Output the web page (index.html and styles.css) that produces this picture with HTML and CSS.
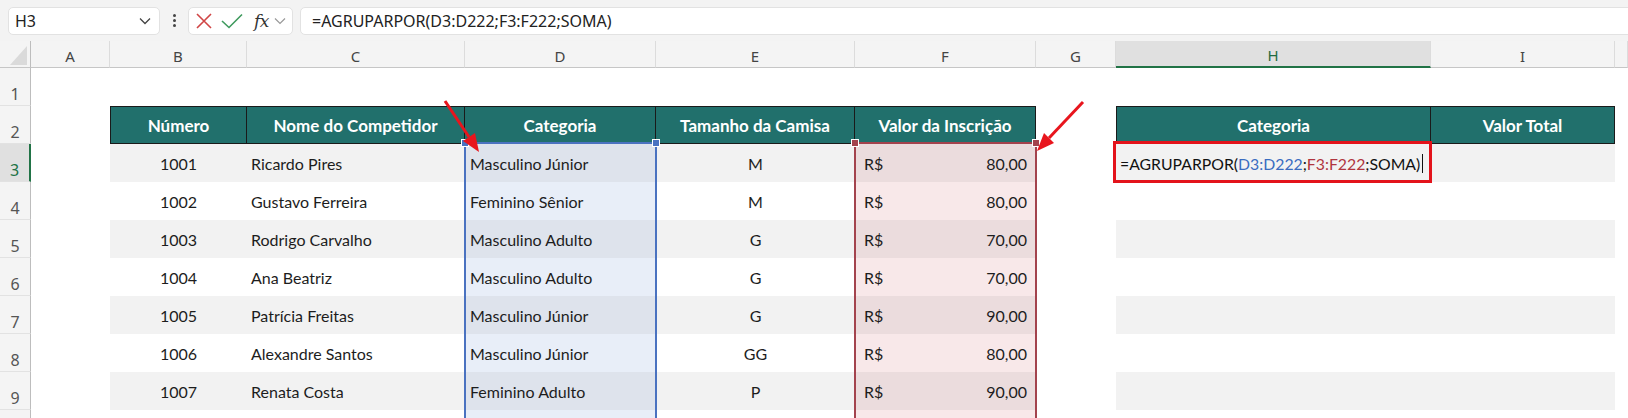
FILE: index.html
```html
<!DOCTYPE html>
<html lang="pt-BR">
<head>
  <meta charset="UTF-8">
  <title>AGRUPARPOR - Planilha</title>
  <link rel="stylesheet" href="styles.css">
</head>
<body>
<div class="app">

  <!-- ====== Barra de fórmulas ====== -->
  <div class="toolbar">
    <div class="namebox">
      <span>H3</span>
      <svg class="chev" width="12" height="8" viewBox="0 0 12 8"><path d="M1 1.5 L6 6.5 L11 1.5" fill="none" stroke="#444" stroke-width="1.3"/></svg>
    </div>
    <div class="dots"><i></i><i></i><i></i></div>
    <div class="fxgroup">
      <svg width="16" height="16" viewBox="0 0 16 16"><path d="M1 1 L15 15 M15 1 L1 15" stroke="#d04545" stroke-width="1.6" fill="none"/></svg>
      <svg width="22" height="16" viewBox="0 0 22 16"><path d="M1 8 L8 14.5 L21 1.5" stroke="#3f9a5e" stroke-width="1.6" fill="none"/></svg>
      <span class="fx">fx</span>
      <svg class="chev-s" width="12" height="8" viewBox="0 0 12 8"><path d="M1 1.5 L6 6.5 L11 1.5" fill="none" stroke="#999" stroke-width="1.2"/></svg>
    </div>
    <div class="formula">=AGRUPARPOR(D3:D222;F3:F222;SOMA)</div>
  </div>

  <!-- ====== Planilha ====== -->
  <div class="sheet">
    <!-- cabeçalho de colunas -->
    <div class="ch corner"><i class="tri"></i></div>
    <div class="ch">A</div><div class="ch">B</div><div class="ch">C</div><div class="ch">D</div>
    <div class="ch">E</div><div class="ch">F</div><div class="ch">G</div>
    <div class="ch ch-sel">H</div><div class="ch">I</div><div class="ch"></div>

    <!-- linha 1 -->
    <div class="rh">1</div>
    <div></div><div></div><div></div><div></div><div></div><div></div><div></div><div></div><div></div><div></div>

    <!-- linha 2: cabeçalhos -->
    <div class="rh">2</div>
    <div></div>
    <div class="th first">Número</div>
    <div class="th">Nome do Competidor</div>
    <div class="th">Categoria</div>
    <div class="th">Tamanho da Camisa</div>
    <div class="th">Valor da Inscrição</div>
    <div></div>
    <div class="th first">Categoria</div>
    <div class="th">Valor Total</div>
    <div></div>

    <!-- linha 3 -->
    <div class="rh rh-sel">3</div>
    <div></div>
    <div class="c st mid">1001</div>
    <div class="c st">Ricardo Pires</div>
    <div class="c st d">Masculino Júnior</div>
    <div class="c st mid">M</div>
    <div class="c st f money"><span>R$</span><span>80,00</span></div>
    <div></div>
    <div class="c st edit">=AGRUPARPOR(<span class="ref-d">D3:D222</span>;<span class="ref-f">F3:F222</span>;SOMA)<i class="caret"></i></div>
    <div class="c st"></div>
    <div></div>

    <!-- linha 4 -->
    <div class="rh">4</div>
    <div></div>
    <div class="c mid">1002</div>
    <div class="c">Gustavo Ferreira</div>
    <div class="c d">Feminino Sênior</div>
    <div class="c mid">M</div>
    <div class="c f money"><span>R$</span><span>80,00</span></div>
    <div></div><div class="c"></div><div class="c"></div><div></div>

    <!-- linha 5 -->
    <div class="rh">5</div>
    <div></div>
    <div class="c st mid">1003</div>
    <div class="c st">Rodrigo Carvalho</div>
    <div class="c st d">Masculino Adulto</div>
    <div class="c st mid">G</div>
    <div class="c st f money"><span>R$</span><span>70,00</span></div>
    <div></div><div class="c st"></div><div class="c st"></div><div></div>

    <!-- linha 6 -->
    <div class="rh">6</div>
    <div></div>
    <div class="c mid">1004</div>
    <div class="c">Ana Beatriz</div>
    <div class="c d">Masculino Adulto</div>
    <div class="c mid">G</div>
    <div class="c f money"><span>R$</span><span>70,00</span></div>
    <div></div><div class="c"></div><div class="c"></div><div></div>

    <!-- linha 7 -->
    <div class="rh">7</div>
    <div></div>
    <div class="c st mid">1005</div>
    <div class="c st">Patrícia Freitas</div>
    <div class="c st d">Masculino Júnior</div>
    <div class="c st mid">G</div>
    <div class="c st f money"><span>R$</span><span>90,00</span></div>
    <div></div><div class="c st"></div><div class="c st"></div><div></div>

    <!-- linha 8 -->
    <div class="rh">8</div>
    <div></div>
    <div class="c mid">1006</div>
    <div class="c">Alexandre Santos</div>
    <div class="c d">Masculino Júnior</div>
    <div class="c mid">GG</div>
    <div class="c f money"><span>R$</span><span>80,00</span></div>
    <div></div><div class="c"></div><div class="c"></div><div></div>

    <!-- linha 9 -->
    <div class="rh">9</div>
    <div></div>
    <div class="c st mid">1007</div>
    <div class="c st">Renata Costa</div>
    <div class="c st d">Feminino Adulto</div>
    <div class="c st mid">P</div>
    <div class="c st f money"><span>R$</span><span>90,00</span></div>
    <div></div><div class="c st"></div><div class="c st"></div><div></div>

    <!-- linha 10 (cortada pela borda) -->
    <div class="rh"></div>
    <div></div><div class="c"></div><div class="c"></div><div class="c d"></div><div class="c"></div>
    <div class="c f"></div><div></div><div class="c"></div><div class="c"></div><div></div>
  </div>

  <!-- ====== Seleções e anotações (sobrepostas) ====== -->
  <div class="sel sel-d"><i class="hd hl"></i><i class="hd hr"></i></div>
  <div class="sel sel-f"><i class="hd hl"></i><i class="hd hr"></i></div>
  <div class="mark"></div>

  <svg class="arrows" width="1628" height="418" viewBox="0 0 1628 418">
    <line x1="445" y1="101" x2="469" y2="137" stroke="#e8151d" stroke-width="3"/>
    <polygon points="479,152 463,141 475,133" fill="#e8151d"/>
    <line x1="1083" y1="102" x2="1049" y2="138" stroke="#e8151d" stroke-width="3"/>
    <polygon points="1037,151 1044,133 1054,143" fill="#e8151d"/>
  </svg>

</div>
</body>
</html>
```

FILE: styles.css
```css
/* ====== Geral ====== */
body {
  margin: 0;
  background: #fff;
  font-family: Lato, "Open Sans", sans-serif;
  color: #1d1d1d;
  overflow: hidden;
}

.app {
  position: relative;
  width: 1628px;
  height: 418px;
  overflow: hidden;
}

/* ====== Barra de fórmulas ====== */
.toolbar {
  height: 41px;
  background: #f3f3f3;
  display: flex;
  align-items: center;
  padding-left: 8px;
  font-family: "Noto Sans", "Open Sans", sans-serif;
}

.namebox {
  width: 152px;
  height: 28px;
  box-sizing: border-box;
  background: #fff;
  border: 1px solid #e2e2e2;
  border-radius: 5px;
  display: flex;
  align-items: center;
  justify-content: space-between;
  padding: 0 8px 0 6px;
  font-size: 16px;
  color: #222;
}

.dots {
  width: 28px;
  display: flex;
  flex-direction: column;
  align-items: center;
  gap: 2px;
}

.dots i {
  width: 3px;
  height: 3px;
  border-radius: 50%;
  background: #444;
}

.fxgroup {
  width: 105px;
  height: 28px;
  box-sizing: border-box;
  background: #fff;
  border: 1px solid #e2e2e2;
  border-radius: 5px;
  display: flex;
  align-items: center;
  padding-left: 7px;
  gap: 9px;
}

.fxgroup .fx {
  font-family: "DejaVu Serif", "Liberation Serif", serif;
  font-style: italic;
  font-size: 17px;
  color: #333;
  margin-left: 2px;
  letter-spacing: -0.5px;
}

.fxgroup .chev-s {
  margin-left: -4px;
}

.formula {
  flex: 1;
  height: 28px;
  box-sizing: border-box;
  margin-left: 7px;
  margin-right: -20px;
  background: #fff;
  border: 1px solid #e2e2e2;
  border-radius: 5px;
  display: flex;
  align-items: center;
  padding-left: 11px;
  font-size: 16px;
  color: #222;
}

/* ====== Grade da planilha ====== */
.sheet {
  display: grid;
  grid-template-columns: 31px 79px 137px 218px 191px 199px 181px 80px 315px 184px 1fr;
  grid-template-rows: 27px repeat(10, 38px);
}

.ch {
  background: #f4f4f4;
  border-right: 1px solid #dcdcdc;
  border-bottom: 1px solid #c6c6c6;
  display: flex;
  align-items: center;
  justify-content: center;
  padding-top: 3px;
  font-family: "Noto Sans", "Open Sans", sans-serif;
  font-size: 15px;
  color: #444;
}

.ch.corner {
  border-right: 1px solid #bdbdbd;
  align-items: flex-end;
  justify-content: flex-end;
  padding: 0 3px 2px 0;
}

.tri {
  width: 17px;
  height: 19px;
  background: #dadada;
  clip-path: polygon(100% 0, 100% 100%, 0 100%);
}

.ch-sel {
  background: #e0e0e0;
  border-bottom: 2px solid #217346;
  color: #1e6b41;
}

.rh {
  background: #f4f4f4;
  border-right: 1px solid #bdbdbd;
  border-bottom: 1px solid #e2e2e2;
  display: flex;
  align-items: flex-end;
  justify-content: center;
  padding-bottom: 1px;
  line-height: 20px;
  font-family: "Noto Sans", "Open Sans", sans-serif;
  font-size: 16px;
  color: #555;
}

.rh-sel {
  background: #e0e0e0;
  border-right: 2px solid #217346;
  color: #217346;
}

/* ====== Tabela ====== */
.th {
  background: #21706c;
  color: #fff;
  font-weight: bold;
  font-size: 17px;
  display: flex;
  align-items: center;
  justify-content: center;
  border-top: 1px solid #1a1a1a;
  border-bottom: 1px solid #1a1a1a;
  border-right: 1px solid #1a1a1a;
}

.th.first {
  border-left: 1px solid #1a1a1a;
}

.c {
  display: flex;
  align-items: center;
  padding: 0 4px;
  font-size: 16px;
  white-space: nowrap;
}

.c.mid {
  justify-content: center;
}

.st {
  background: #f2f2f2;
}

.c.d {
  background: #e8eef8;
  padding-left: 5px;
}

.c.d.st {
  background: #dee3ec;
}

.c.f {
  background: #f8e8e9;
}

.c.f.st {
  background: #ebdcdd;
}

.money {
  justify-content: space-between;
  padding: 0 9px 0 9px;
}

.edit {
  padding-left: 4px;
  font-size: 15.8px;
  color: #111;
}

.ref-d {
  color: #3a6cc0;
}

.ref-f {
  color: #b0353f;
}

.caret {
  display: inline-block;
  width: 1px;
  height: 19px;
  background: #111;
  margin-left: 2px;
}

/* ====== Seleções ====== */
.sel {
  position: absolute;
  top: 142px;
  height: 300px;
  box-sizing: border-box;
  border: 2px solid;
  border-bottom: none;
}

.sel-d {
  left: 464px;
  width: 193px;
  border-color: #4a72c0;
}

.sel-f {
  left: 854px;
  width: 183px;
  border-color: #a3434d;
}

.hd {
  position: absolute;
  top: -5px;
  width: 6px;
  height: 6px;
  border: 1px solid #fff;
}

.sel-d .hd {
  background: #4a72c0;
}

.sel-f .hd {
  background: #a3434d;
}

.hd.hl {
  left: -5px;
}

.hd.hr {
  right: -5px;
}

.mark {
  position: absolute;
  left: 1113px;
  top: 141px;
  width: 319px;
  height: 42px;
  box-sizing: border-box;
  border: 3px solid #e3131b;
}

.arrows {
  position: absolute;
  left: 0;
  top: 0;
  pointer-events: none;
}
```
